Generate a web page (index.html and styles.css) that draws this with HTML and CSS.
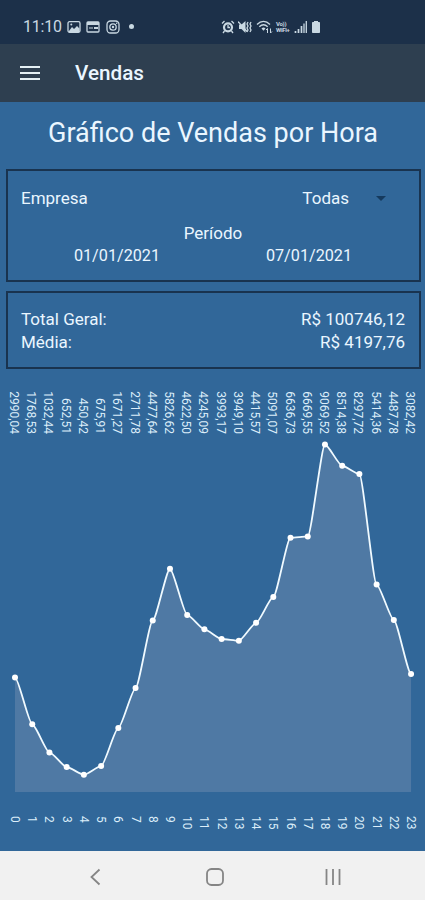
FILE: index.html
```html
<!DOCTYPE html>
<html lang="pt-br">
<head>
    <meta charset="UTF-8">
    <meta name="viewport" content="width=device-width, initial-scale=1.0">
    <title>Vendas</title>
    <link rel="stylesheet" href="styles.css">
</head>
<body>
    <div class="status-bar">
        <div class="status-left">
            <span class="clock">11:10</span>
            <svg width="14" height="14" viewBox="0 0 14 14">
                <rect x="1" y="1.700" width="12" height="10.600" rx="1.500" class="line"/>
                <path d="M2 11l3-4 2 2 3-3 2.500 2.500V12H2z" class="solid"/>
                <circle cx="4.300" cy="4.500" r="1" class="solid"/>
            </svg>
            <svg width="14" height="14" viewBox="0 0 14 14">
                <rect x="1" y="2" width="12" height="10" rx="1" class="line"/>
                <path d="M1 2h12v3H1zM8 7h4v2H8z" class="solid"/>
                <path d="M3 8h4" class="line thin"/>
            </svg>
            <svg width="14" height="14" viewBox="0 0 14 14">
                <rect x="1" y="1" width="12" height="12" rx="3.500" class="line"/>
                <circle cx="7" cy="7" r="3.200" class="line"/>
                <circle cx="7" cy="7" r="1.200" class="solid"/>
                <circle cx="10.700" cy="3.300" r=".8" class="solid"/>
            </svg>
            <span class="dot"></span>
        </div>
        <div class="status-right">
            <svg width="14" height="14" viewBox="0 0 14 14">
                <circle cx="7" cy="7.300" r="4" class="line alarm"/>
                <path d="M7 5v2.500h2M1 3.500L3.500 1M13 3.500L10.500 1M3.500 11L2 13M10.500 11l1.500 2" class="line"/>
            </svg>
            <svg width="14" height="14" viewBox="0 0 14 14">
                <path d="M1 4.500h2.500L7.500 1v12L3.500 9H1z" class="solid"/>
                <path d="M0 1.500l9 10" class="line"/>
                <path d="M10 2l-1 2 1 2-1 2 1 2-1 2M13 2l-1 2 1 2-1 2 1 2-1 2" class="line"/>
            </svg>
            <svg width="17" height="14" viewBox="0 0 17 14">
                <path d="M1 4.500c4-4 9-4 13 0M3.300 6.800c2.700-2.600 5.700-2.600 8.400 0" class="line"/>
                <path d="M5.500 8.500c1.300-1.200 2.700-1.200 4 0l-2 2.200z" class="solid"/>
                <path d="M11.500 13V8.500M10 10l1.500-1.500M14.500 8.500V13l1.500-1.500" class="line thin"/>
            </svg>
            <span class="volte"><span>Vo))</span><span>WiFi+</span></span>
            <svg width="13" height="14" viewBox="0 0 13 14">
                <path d="M1.500 13v-2M4.500 13V9M7.500 13V6" class="line thick"/>
                <path d="M10 13V3.500M12.300 13V1" class="line"/>
            </svg>
            <svg class="battery" width="10" height="14" viewBox="0 0 10 14">
                <path d="M3 1h4v1h1.200q.8 0 .8.800v9.400q0 .8-.8.800H1.800q-.8 0-.8-.8V2.800q0-.8.800-.8H3z" class="solid"/>
            </svg>
        </div>
    </div>

    <header class="toolbar">
        <button class="menu" aria-label="Menu"><span></span><span></span><span></span></button>
        <h1>Vendas</h1>
    </header>

    <main>
        <h2>Gráfico de Vendas por Hora</h2>

        <section class="box filter">
            <div class="row">
                <span>Empresa</span>
                <span class="select">Todas <i class="arrow"></i></span>
            </div>
            <div class="period">Período</div>
            <div class="dates">
                <span>01/01/2021</span>
                <span>07/01/2021</span>
            </div>
        </section>

        <section class="box totals">
            <div class="row"><span>Total Geral:</span><span>R$ 100746,12</span></div>
            <div class="row"><span>Média:</span><span>R$ 4197,76</span></div>
        </section>

        <svg id="chart" class="chart" width="425" height="481" viewBox="0 0 425 481"></svg>
    </main>

    <nav class="nav-bar">
        <svg width="20" height="20" viewBox="0 0 20 20"><path d="M13.500 2.500L5.500 10l8 7.500"/></svg>
        <svg width="20" height="20" viewBox="0 0 20 20"><rect x="2" y="2" width="16" height="16" rx="4.500"/></svg>
        <svg width="20" height="20" viewBox="0 0 20 20"><path d="M3.500 2v16M10 2v16M16.500 2v16"/></svg>
    </nav>

    <script>
        const sales = [
            "2990,04", "1768,53", "1032,44", "652,51", "450,42", "675,91",
            "1671,27", "2711,78", "4477,64", "5826,62", "4622,50", "4245,09",
            "3993,17", "3949,10", "4415,57", "5091,07", "6636,73", "6669,55",
            "9069,52", "8514,38", "8297,72", "5414,36", "4487,78", "3082,42"
        ];
        const left = 15, step = 17.22, base = 422, height = 347.5;
        const values = sales.map(s => parseFloat(s.replace(",", ".")));
        const max = Math.max(...values);
        const points = values.map((v, i) => [left + i * step, base - v / max * height]);

        // horizontal handles round the line a little at each point
        const bend = 3.5;
        let line = `M${points[0]}`;
        for (let i = 1; i < points.length; i++) {
            const [x0, y0] = points[i - 1];
            const [x1, y1] = points[i];
            line += ` C${x0 + bend},${y0} ${x1 - bend},${y1} ${x1},${y1}`;
        }
        const right = points[points.length - 1][0];

        let svg = `<path class="area" d="${line} L${right},${base} L${left},${base} Z"/>`;
        svg += `<path class="curve" d="${line}"/>`;
        points.forEach(([x, y], i) => {
            svg += `<circle class="point" cx="${x}" cy="${y}" r="3"/>`;
            svg += `<text class="value" transform="translate(${x - 5} 64) rotate(90)">${sales[i]}</text>`;
            svg += `<text class="hour" transform="translate(${x - 4} 446) rotate(90)">${i}</text>`;
        });
        document.getElementById("chart").innerHTML = svg;
    </script>
</body>
</html>
```
FILE: styles.css
```css
* {
    box-sizing: border-box;
}
body {
    margin: 0;
    width: 425px;
    height: 900px;
    display: flex;
    flex-direction: column;
    font-family: Roboto, sans-serif;
    font-size: 17px;
    color: #eaf6ff;
    background-color: #316799;
    overflow: hidden;
}
.status-bar {
    height: 44px;
    padding: 9px 104px 0 23px;
    display: flex;
    justify-content: space-between;
    align-items: center;
    background-color: #1c3049;
    color: #c9d8e2;
}
.status-left, .status-right {
    display: flex;
    align-items: center;
}
.status-left {
    gap: 5.5px;
}
.status-right {
    gap: 3.5px;
}
.clock {
    font-size: 16px;
    width: 39px;
    letter-spacing: -0.2px;
    margin-right: -1px;
}
.dot {
    width: 5px;
    height: 5px;
    margin-left: 4px;
    border-radius: 50%;
    background-color: #c9d8e2;
}
.solid {
    fill: #c9d8e2;
}
.line {
    fill: none;
    stroke: #c9d8e2;
    stroke-width: 1.3;
}
.thin {
    stroke-width: 1;
}
.thick {
    stroke-width: 1.7;
}
.alarm {
    stroke-width: 2.2;
}
.volte {
    display: flex;
    flex-direction: column;
    width: 14px;
    font-size: 6px;
    font-weight: bold;
    line-height: 6px;
    letter-spacing: -0.3px;
}
.battery {
    margin-left: 1px;
}
.toolbar {
    height: 58px;
    padding: 0 20px 1px;
    display: flex;
    align-items: center;
    background-color: #2e3f50;
}
.menu {
    width: 20px;
    padding: 0;
    border: none;
    background: none;
    display: flex;
    flex-direction: column;
    gap: 4px;
}
.menu span {
    height: 2px;
    background-color: #e4f0f5;
}
h1 {
    margin: 1px 0 0 35px;
    font-size: 20.7px;
    font-weight: 500;
}
main {
    height: 749px;
    display: flex;
    flex-direction: column;
}
h2 {
    margin: 0;
    height: 67px;
    padding: 14px 0 0 1px;
    font-size: 27px;
    line-height: 34px;
    font-weight: 400;
    text-align: center;
}
.box {
    margin: 0 4px 0 6px;
    border: 2px solid #19334f;
    padding: 0 14px 0 13px;
}
.filter {
    height: 113px;
    padding-top: 16px;
}
.row {
    display: flex;
    justify-content: space-between;
    line-height: 23px;
}
.select {
    display: flex;
    align-items: center;
    padding-right: 19px;
}
.arrow {
    margin-left: 27px;
    border: 5px solid transparent;
    border-top-color: #153a5e;
    border-bottom: none;
}
.period {
    margin-top: 12px;
    line-height: 23px;
    text-align: center;
}
.dates {
    display: flex;
    justify-content: space-around;
    font-size: 16.2px;
    line-height: 21px;
}
.totals {
    height: 78px;
    margin-top: 9px;
    padding-top: 15px;
}
.chart {
    display: block;
    flex-shrink: 0;
    margin-top: 1px;
}
.area {
    fill: #4f79a4;
}
.curve {
    fill: none;
    stroke: #f0faff;
    stroke-width: 1.8;
}
.point {
    fill: #fff;
}
.value {
    font-size: 12px;
    text-anchor: end;
    fill: #dceefa;
}
.hour {
    font-size: 12px;
    fill: #dceefa;
}
.nav-bar {
    height: 49px;
    padding: 2px 82px 0 86px;
    display: flex;
    justify-content: space-between;
    align-items: center;
    background-color: #f1f1f1;
}
.nav-bar svg {
    fill: none;
    stroke: #858585;
    stroke-width: 1.8;
}
```
